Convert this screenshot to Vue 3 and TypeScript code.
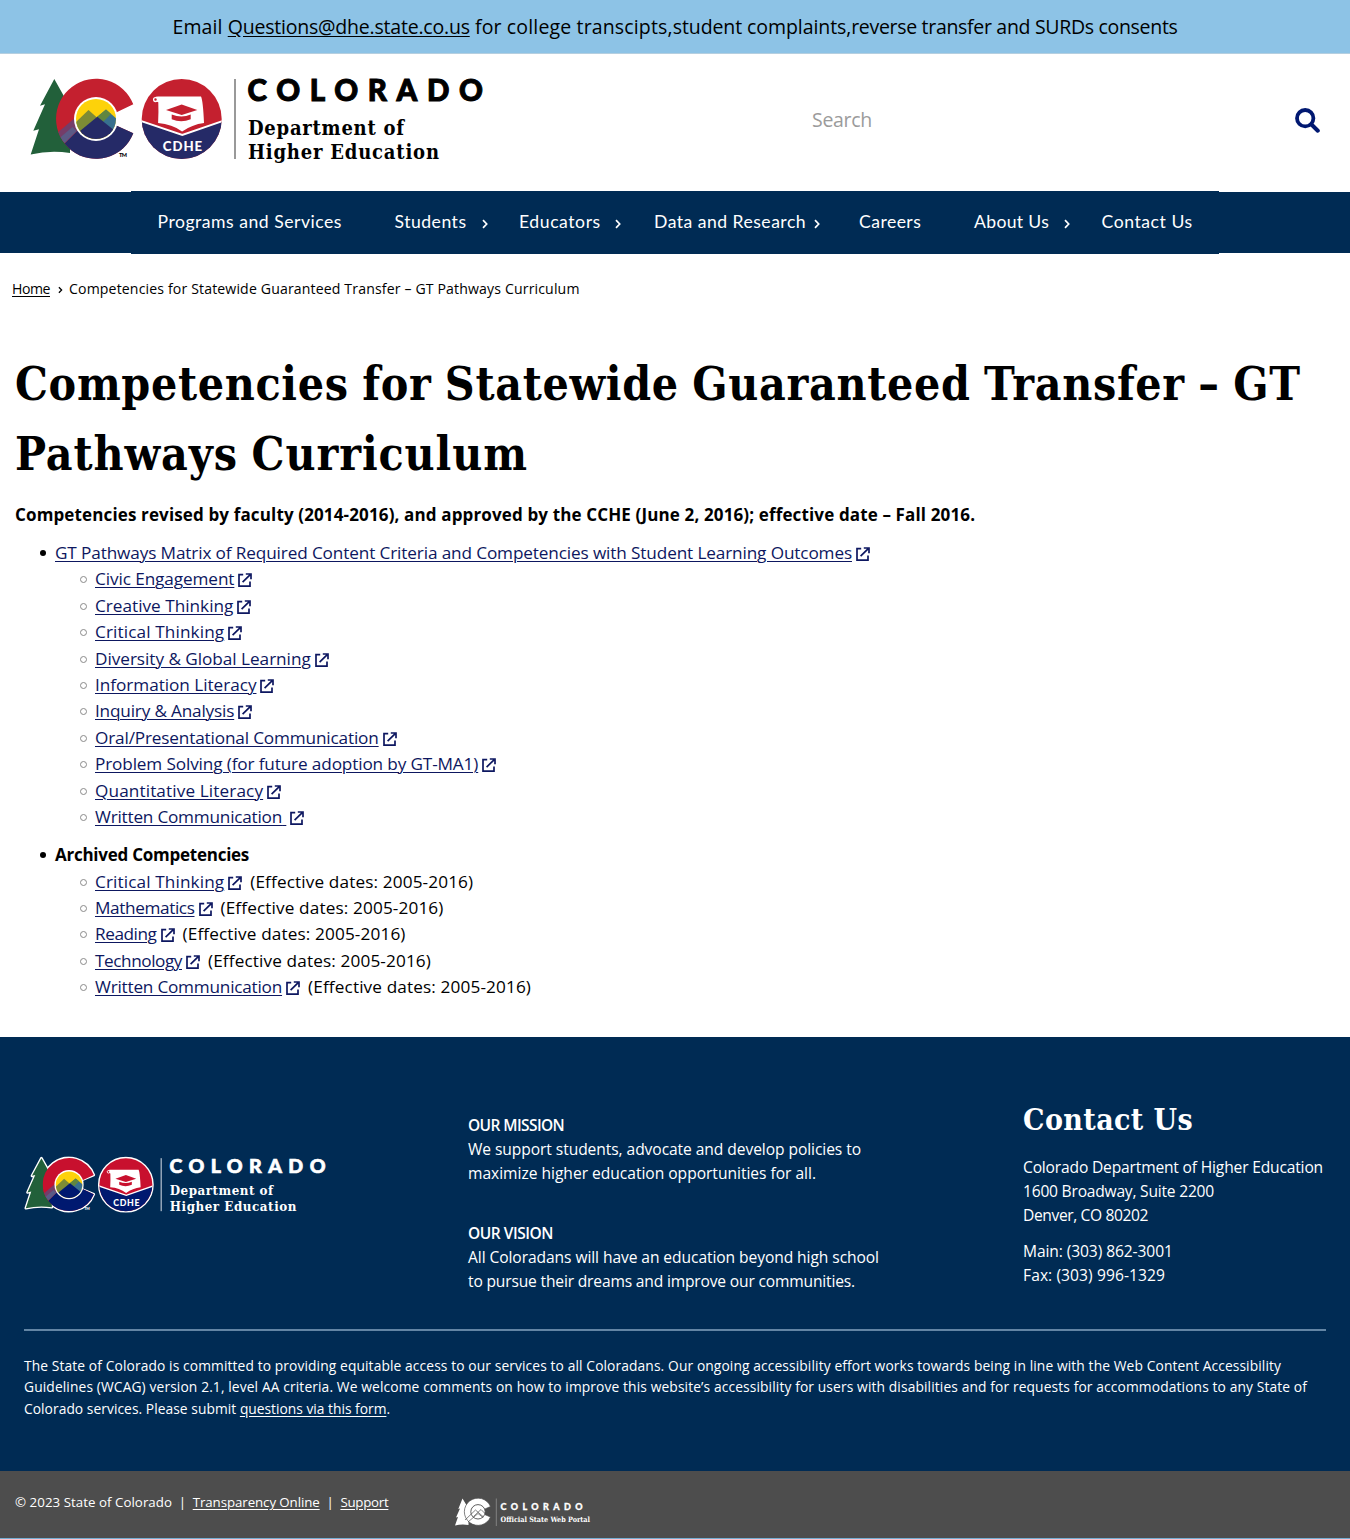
<script setup lang="ts">
interface Label {
  text: string
  tracking: number
}

interface NavItem extends Label {
  menu?: boolean
  tight?: boolean
}

interface Competency extends Label {
  note?: string
  trailingSpace?: boolean
}

const navItems: NavItem[] = [
  { text: 'Programs and Services', tracking: 0.51 },
  { text: 'Students', tracking: 0.5, menu: true },
  { text: 'Educators', tracking: 0.56, menu: true },
  { text: 'Data and Research', tracking: 0.48, menu: true, tight: true },
  { text: 'Careers', tracking: 0.45 },
  { text: 'About Us', tracking: 0.33, menu: true },
  { text: 'Contact Us', tracking: 0.55 },
]

const current: Competency[] = [
  { text: 'Civic Engagement', tracking: -0.1 },
  { text: 'Creative Thinking', tracking: 0 },
  { text: 'Critical Thinking', tracking: 0.11 },
  { text: 'Diversity & Global Learning', tracking: -0.04 },
  { text: 'Information Literacy', tracking: -0.04 },
  { text: 'Inquiry & Analysis', tracking: -0.18 },
  { text: 'Oral/Presentational Communication', tracking: -0.16 },
  { text: 'Problem Solving (for future adoption by GT-MA1)', tracking: -0.14 },
  { text: 'Quantitative Literacy', tracking: 0.11 },
  { text: 'Written Communication', tracking: -0.22, trailingSpace: true },
]

const dates = '(Effective dates: 2005-2016)'
const archived: Competency[] = [
  { text: 'Critical Thinking', tracking: 0.11, note: dates },
  { text: 'Mathematics', tracking: -0.38, note: dates },
  { text: 'Reading', tracking: -0.43, note: dates },
  { text: 'Technology', tracking: -0.44, note: dates },
  { text: 'Written Communication', tracking: -0.22, note: dates },
]

const groups = [
  {
    heading: 'GT Pathways Matrix of Required Content Criteria and Competencies with Student Learning Outcomes',
    link: true,
    items: current,
  },
  { heading: 'Archived Competencies', link: false, items: archived },
]

const statements: { title: Label; lines: Label[] }[] = [
  {
    title: { text: 'OUR MISSION', tracking: -0.6 },
    lines: [
      { text: 'We support students, advocate and develop policies to', tracking: -0.075 },
      { text: 'maximize higher education opportunities for all.', tracking: -0.024 },
    ],
  },
  {
    title: { text: 'OUR VISION', tracking: -0.46 },
    lines: [
      { text: 'All Coloradans will have an education beyond high school', tracking: -0.081 },
      { text: 'to pursue their dreams and improve our communities.', tracking: -0.172 },
    ],
  },
]

const contact: Label[][] = [
  [
    { text: 'Colorado Department of Higher Education', tracking: -0.174 },
    { text: '1600 Broadway, Suite 2200', tracking: -0.219 },
    { text: 'Denver, CO 80202', tracking: -0.38 },
  ],
  [
    { text: 'Main: (303) 862-3001', tracking: -0.1 },
    { text: 'Fax: (303) 996-1329', tracking: 0.081 },
  ],
]

const wordmark = [
  { text: 'TM', x: 89, y: 79, size: 5.5, width: 8, family: 'ink sans' },
  { text: 'CDHE', x: 132.7, y: 72.8, size: 13.2, width: 39.5, family: 'sans seal-text' },
  { text: 'COLORADO', x: 217.5, y: 23, size: 29.5, width: 235.5, family: 'ink sans heavy' },
  { text: 'Department of', x: 218, y: 56.8, size: 20, width: 156, family: 'ink slab' },
  { text: 'Higher Education', x: 218, y: 80.6, size: 20, width: 191, family: 'ink slab' },
]

const track = (value: number) => ({ letterSpacing: `${value}px` })
</script>

<template>
  <div class="page">
    <svg class="sprite" width="0" height="0" aria-hidden="true">
      <symbol id="external" viewBox="0 0 14 14">
        <path d="M5.2 1.6H1v11.5h11V8.6M4.6 9.2 12 1.8M7.8 1h5.2v5.2" fill="none" stroke="currentColor" stroke-width="1.7" />
      </symbol>
      <symbol id="cdhe-art" viewBox="-2 -2 458 90">
        <g class="outline">
          <path d="M24.3 1 40 29v46Q20 72 .7 76.5L9 51.3 3.3 52.7 15 26.3 10 27.7Z" />
          <path d="M103.3 26.3A40 40 0 1 0 103.3 55.3L84 47.5V34.5Z" />
          <circle cx="151.7" cy="41" r="40.1" />
        </g>
        <path fill="#22603a" d="M24.3 1 40 29v46Q20 72 .7 76.5L9 51.3 3.3 52.7 15 26.3 10 27.7Z" />
        <clipPath id="c-shape"><path d="M103.3 26.3A40 40 0 1 0 103.3 55.3L84 46.5V35.5Z" /></clipPath>
        <g clip-path="url(#c-shape)">
          <path class="red" d="M20 0h90v82H20Z" />
          <path class="navy" d="m34 66 21-21 25 2h30v40H50Z" />
          <path fill="#753d69" d="M26 56 46 39l5 10-16 16Z" />
          <path fill="#5b5a86" d="m34.5 65 12-12-4-4-13 11Z" />
        </g>
        <circle cx="66" cy="41" r="22" fill="#fff" />
        <clipPath id="c-core"><circle cx="66" cy="41" r="20" /></clipPath>
        <g clip-path="url(#c-core)">
          <path fill="#fdd20a" d="M45 20h42v42H45Z" />
          <path fill="#7d8b35" d="M44 46 58.5 32l9 8L54 53H44Z" />
          <path fill="#38708f" d="m67 39 9-7.5L88 42v14H76Z" />
          <path fill="#60863f" d="m67 39 9-7.5 5 4.5-8 8Z" />
          <path class="navy" d="m67.3 38.8 20 16V62H45v-5Z" />
        </g>

        <clipPath id="seal"><circle cx="151.7" cy="41" r="40" /></clipPath>
        <g clip-path="url(#seal)">
          <path class="red" d="M110 0h84v82h-84Z" />
          <path class="navy" d="m110 43 42.3 14.5L194 43v40h-84Z" />
          <path d="m110 42.6 42.3 14.4L194 42.6" fill="none" stroke="#fff" stroke-width="2" />
        </g>
        <path fill="#fff" d="M125 20q0-1.400 3-1.400h43q2 4 3 26.400-12 1.500-21.900 8.500-10-7.500-24-8.500.6-12 .2-20.800-3.300-.4-3.300-4.200Z" />
        <circle cx="125.500" cy="21.600" r="1.900" class="red" stroke="#fff" stroke-width="1.300" />
        <path class="red" d="m136 32 15.700-5.500L167.300 32l-15.600 5Z" />
        <path class="red" d="M141.700 36.600q10 3.700 19 0v4.600q-9.500 4-19 0Z" />
        <path class="rule" d="M205 1v80" />
      </symbol>
    </svg>

    <div class="banner">
      <span class="b-email">Email </span><a class="mail" href="#">Questions@dhe.state.co.us</a><span class="b-for"> for college transcipts,</span><span class="b-student">student complaints,</span><span class="b-rest">reverse transfer and SURDs consents</span>
    </div>

    <header class="header">
      <svg class="logo" viewBox="-2 -2 458 90" role="img" aria-label="Colorado Department of Higher Education">
        <use href="#cdhe-art" x="-2" y="-2" width="458" height="90" />
        <text v-for="t in wordmark" :key="t.text" :class="t.family" :x="t.x" :y="t.y" :font-size="t.size" :textLength="t.width">{{ t.text }}</text>
      </svg>
      <div class="search">
        <span class="search-hint">Search</span>
        <svg class="search-icon" viewBox="0 0 25 25" fill="none" stroke="currentColor">
          <circle cx="10.200" cy="10.200" r="8.200" stroke-width="3.800" />
          <path d="m16.500 16.500 6.300 6.200" stroke-width="4" stroke-linecap="round" />
        </svg>
      </div>
    </header>

    <nav class="nav">
      <div class="nav-inner">
        <a v-for="item in navItems" :key="item.text" href="#" :class="{ tight: item.tight }">
          <span :style="track(item.tracking)">{{ item.text }}</span>
          <svg v-if="item.menu" class="chevron" viewBox="0 0 6 10"><path d="m1 1.200 3.700 3.800L1 8.800" fill="none" stroke="currentColor" stroke-width="1.700" /></svg>
        </a>
      </div>
    </nav>

    <div class="crumbs">
      <a href="#">Home</a>
      <svg class="crumb-sep" viewBox="0 0 6 10"><path d="m1 1.500 3.400 3.500L1 8.500" fill="none" stroke="currentColor" stroke-width="1.600" /></svg>
      <span class="crumb-current">Competencies for Statewide Guaranteed Transfer – GT Pathways Curriculum</span>
    </div>

    <main class="content">
      <h1><span>Competencies for Statewide Guaranteed Transfer – GT</span><br><span class="second">Pathways Curriculum</span></h1>
      <p class="intro">Competencies revised by faculty (2014-2016), and approved by the CCHE (June 2, 2016); effective date – Fall 2016.</p>
      <ul class="groups">
        <li v-for="group in groups" :key="group.heading" class="group">
          <div class="line">
            <template v-if="group.link"><a class="main-link" href="#">{{ group.heading }}</a><svg class="external"><use href="#external" /></svg></template>
            <strong v-else>{{ group.heading }}</strong>
          </div>
          <ul>
            <li v-for="item in group.items" :key="item.text" class="line sub">
              <a href="#" :style="track(item.tracking)">{{ item.text }}<template v-if="item.trailingSpace">&nbsp;</template></a><svg class="external"><use href="#external" /></svg><span v-if="item.note" class="note">{{ item.note }}</span>
            </li>
          </ul>
        </li>
      </ul>
    </main>

    <footer class="footer">
      <div class="footer-top">
        <svg class="footer-logo" viewBox="-2 -2 458 90" role="img" aria-label="Colorado Department of Higher Education">
          <use href="#cdhe-art" x="-2" y="-2" width="458" height="90" />
          <text v-for="t in wordmark" :key="t.text" :class="t.family" :x="t.x" :y="t.y" :font-size="t.size" :textLength="t.width">{{ t.text }}</text>
        </svg>
        <div class="statements">
          <div v-for="s in statements" :key="s.title.text" class="statement">
            <strong :style="track(s.title.tracking)">{{ s.title.text }}</strong>
            <span v-for="l in s.lines" :key="l.text" :style="track(l.tracking)">{{ l.text }}</span>
          </div>
        </div>
        <div class="contact">
          <h2>Contact Us</h2>
          <p v-for="(block, i) in contact" :key="i">
            <span v-for="l in block" :key="l.text" :style="track(l.tracking)">{{ l.text }}</span>
          </p>
        </div>
      </div>
      <p class="access">
        <span>The State of Colorado is committed to providing equitable access to our services to all Coloradans. Our ongoing accessibility effort works towards being in line with the Web Content Accessibility</span>
        <span class="second">Guidelines (WCAG) version 2.1, level AA criteria. We welcome comments on how to improve this website’s accessibility for users with disabilities and for requests for accommodations to any State of</span>
        <span class="last">Colorado services. Please submit <a href="#">questions via this form</a>.</span>
      </p>
    </footer>

    <div class="bottom">
      <div class="legal">
        <span>© 2023 State of Colorado</span><i>|</i><a href="#">Transparency Online</a><i>|</i><a class="support" href="#">Support</a>
      </div>
      <svg class="portal" viewBox="0 0 150 40" role="img" aria-label="Colorado Official State Web Portal">
        <path fill="#fff" d="m12.500 7.500 6 10v16.500q-7-1-13.500.5l3-8.500-2 .5 4-9-1.700.4Z" />
        <path fill="#fff" stroke="#4d4d4d" stroke-width=".7" d="M40.500 15.500A13.600 13.600 0 1 0 40.500 26L34.500 23.400V18.200Z" />
        <circle cx="28" cy="20.800" r="7.200" fill="#fff" stroke="#4d4d4d" stroke-width=".9" />
        <path d="m15 29 10.500-10 8 7m-10-.5 7.500-7 4 4M18 31l10-8.500 5 4" fill="none" stroke="#4d4d4d" stroke-width=".7" />
        <path d="M46.300 7.500V35" stroke="#999" stroke-width=".7" />
        <text class="sans portal-name" x="50.500" y="18.700" textLength="82">COLORADO</text>
        <text class="slab portal-sub" x="50.500" y="30.800" textLength="89.500" lengthAdjust="spacingAndGlyphs">Official State Web Portal</text>
      </svg>
    </div>
  </div>
</template>

<style>
body { margin: 0; background: #fff; }
</style>

<style scoped>
.page { width: 1350px; font-family: "Open Sans", sans-serif; color: #000; white-space: nowrap; overflow: hidden; }
.page a { color: inherit; }
.page ul, .page p, .page h1, .page h2 { margin: 0; padding: 0; }
.page ul { list-style: none; }
.sprite { position: absolute; }
.sans { font-family: Lato, sans-serif; font-weight: 900; }
.slab { font-family: "DejaVu Serif Condensed", "DejaVu Serif", serif; font-weight: 700; }
.ink { fill: currentColor; }
.heavy { stroke: currentColor; stroke-width: 1; }
.seal-text { fill: #fff; }
.red { fill: var(--red, #c4202f); }
.navy { fill: var(--navy, #252a67); }
.outline { fill: none; stroke: var(--outline, none); stroke-width: 4; stroke-linejoin: round; }
.rule { stroke: var(--rule, #777); stroke-width: 1.5; }

.banner { box-sizing: border-box; display: flex; justify-content: center; height: 54px; border-bottom: 1px solid #b5cfe0; background: #8dc3e6; font-size: 19.5px; line-height: 54px; white-space: pre; }
.b-email { letter-spacing: .1px; }
.mail { letter-spacing: -.209px; text-underline-offset: 2px; }
.b-for { letter-spacing: .15px; }
.b-student { letter-spacing: -.08px; }
.b-rest { letter-spacing: -.31px; }

.header { display: flex; justify-content: space-between; align-items: flex-start; height: 138px; box-sizing: border-box; padding: 22px 30px 0 28px; }
.logo { width: 458px; height: 90px; }
.search { display: flex; justify-content: space-between; align-items: center; width: 508px; height: 88px; color: #001871; }
.search-hint { color: #9b9b9b; font-size: 19.5px; letter-spacing: -.29px; line-height: 28px; margin-top: -1px; }
.search-icon { width: 25px; height: 25px; }

.nav { height: 61px; background: #002b54; display: flex; justify-content: center; }
.nav-inner { box-sizing: border-box; width: 1088px; height: 63px; margin-top: -1px; padding: 0 0 2px 26.5px; background: #002b54; display: grid; grid-template-columns: 237px 124.5px 135px 205px 115px 127.5px auto; font: 17.6px/60px Lato, sans-serif; color: #fff; }
.nav-inner a { display: flex; justify-content: space-between; align-items: center; padding-right: 31.5px; text-decoration: none; }
.nav-inner a:nth-child(3) { padding-right: 33px; }
.nav-inner a.tight { padding-right: 39px; }
.nav-inner a:last-child { padding-right: 0; }
.chevron { width: 6px; height: 10px; margin-top: 4px; }

.crumbs { display: flex; align-items: center; height: 70px; box-sizing: border-box; padding: 2px 0 0 12px; font-size: 14.1px; line-height: 22px; }
.crumbs a { letter-spacing: -.46px; text-underline-offset: 2px; }
.crumb-sep { width: 5px; height: 8px; margin: 1px 6.500px 0 7.500px; }
.crumb-current { letter-spacing: .14px; }

.content { height: 714px; padding: 0 15px; box-sizing: border-box; }
.content h1 { padding-top: 26px; font: 700 46px/70px "DejaVu Serif Condensed", "DejaVu Serif", serif; letter-spacing: .67px; word-spacing: -1.600px; }
.content h1 .second { letter-spacing: .9px; }
.intro { padding-top: 12px !important; font-size: 17px; font-weight: 700; line-height: 28px; letter-spacing: .138px; }
.content .groups { padding: 11px 0 0 40px; }
.group { margin-bottom: 12px; }
.group > ul { padding-left: 40px !important; }
.line { height: 26.4px; line-height: 26.4px; font-size: 17.2px; position: relative; }
.line a { color: #0d1760; text-decoration-thickness: 1.4px; text-underline-offset: 1.500px; }
.line .main-link { letter-spacing: -.131px; }
.line strong { font-size: 17px; letter-spacing: -.250px; }
.line::before { content: ""; position: absolute; left: -15px; top: 10px; width: 6px; height: 6px; border-radius: 50%; background: #000; }
.line.sub::before { box-sizing: border-box; width: 7px; height: 7px; background: none; border: 1.200px solid #8a8a8a; }
.external { width: 14px; height: 14px; margin-left: 4px; vertical-align: -2px; color: #0d1760; }
.note { margin-left: 8px; letter-spacing: .126px; }

.footer { height: 434px; box-sizing: border-box; padding: 0 24px; background: #002b54; color: #fff; }
.footer-top { display: grid; grid-template-columns: 444px 555px auto; height: 294px; box-sizing: border-box; border-bottom: 2px solid #6385a5; font-size: 15.6px; line-height: 24px; }
.footer-logo { width: 303.500px; height: 60px; margin-top: 119px; --outline: #fff; --rule: #dde3ea; --red: #c8102e; --navy: #001970; }
.statements { padding-top: 76px; }
.statement { display: flex; flex-direction: column; align-items: flex-start; margin-bottom: 36px; }
.statement strong { font-size: 15.5px; font-weight: 600; }
.contact { padding-top: 63px; }
.contact h2 { font: 700 30px/40px "DejaVu Serif Condensed", "DejaVu Serif", serif; letter-spacing: .39px; margin-bottom: 15px; }
.contact p { display: flex; flex-direction: column; align-items: flex-start; margin-bottom: 12px; }
.access { display: flex; flex-direction: column; padding-top: 24px !important; font-size: 13.8px; line-height: 21.4px; letter-spacing: .107px; }
.access .second { letter-spacing: .117px; }
.access .last { letter-spacing: .05px; }
.access a { letter-spacing: 0; text-underline-offset: 2px; }

.bottom { display: flex; height: 68px; box-sizing: border-box; border-bottom: 1px solid #75add1; background: #4d4d4d; color: #fff; font-size: 13.3px; line-height: 62px; }
.legal { width: 435px; padding-left: 15px; }
.legal span { letter-spacing: .038px; }
.legal i { margin: 0 6.700px; font-style: normal; }
.legal a { letter-spacing: -.081px; text-underline-offset: 2px; }
.legal a.support { letter-spacing: -.27px; }
.portal { width: 150px; height: 40px; margin-top: 20px; }
.portal-name { fill: #fff; stroke: #fff; stroke-width: .3; font-size: 9px; }
.portal-sub { fill: #fff; font-size: 7.300px; }
</style>
